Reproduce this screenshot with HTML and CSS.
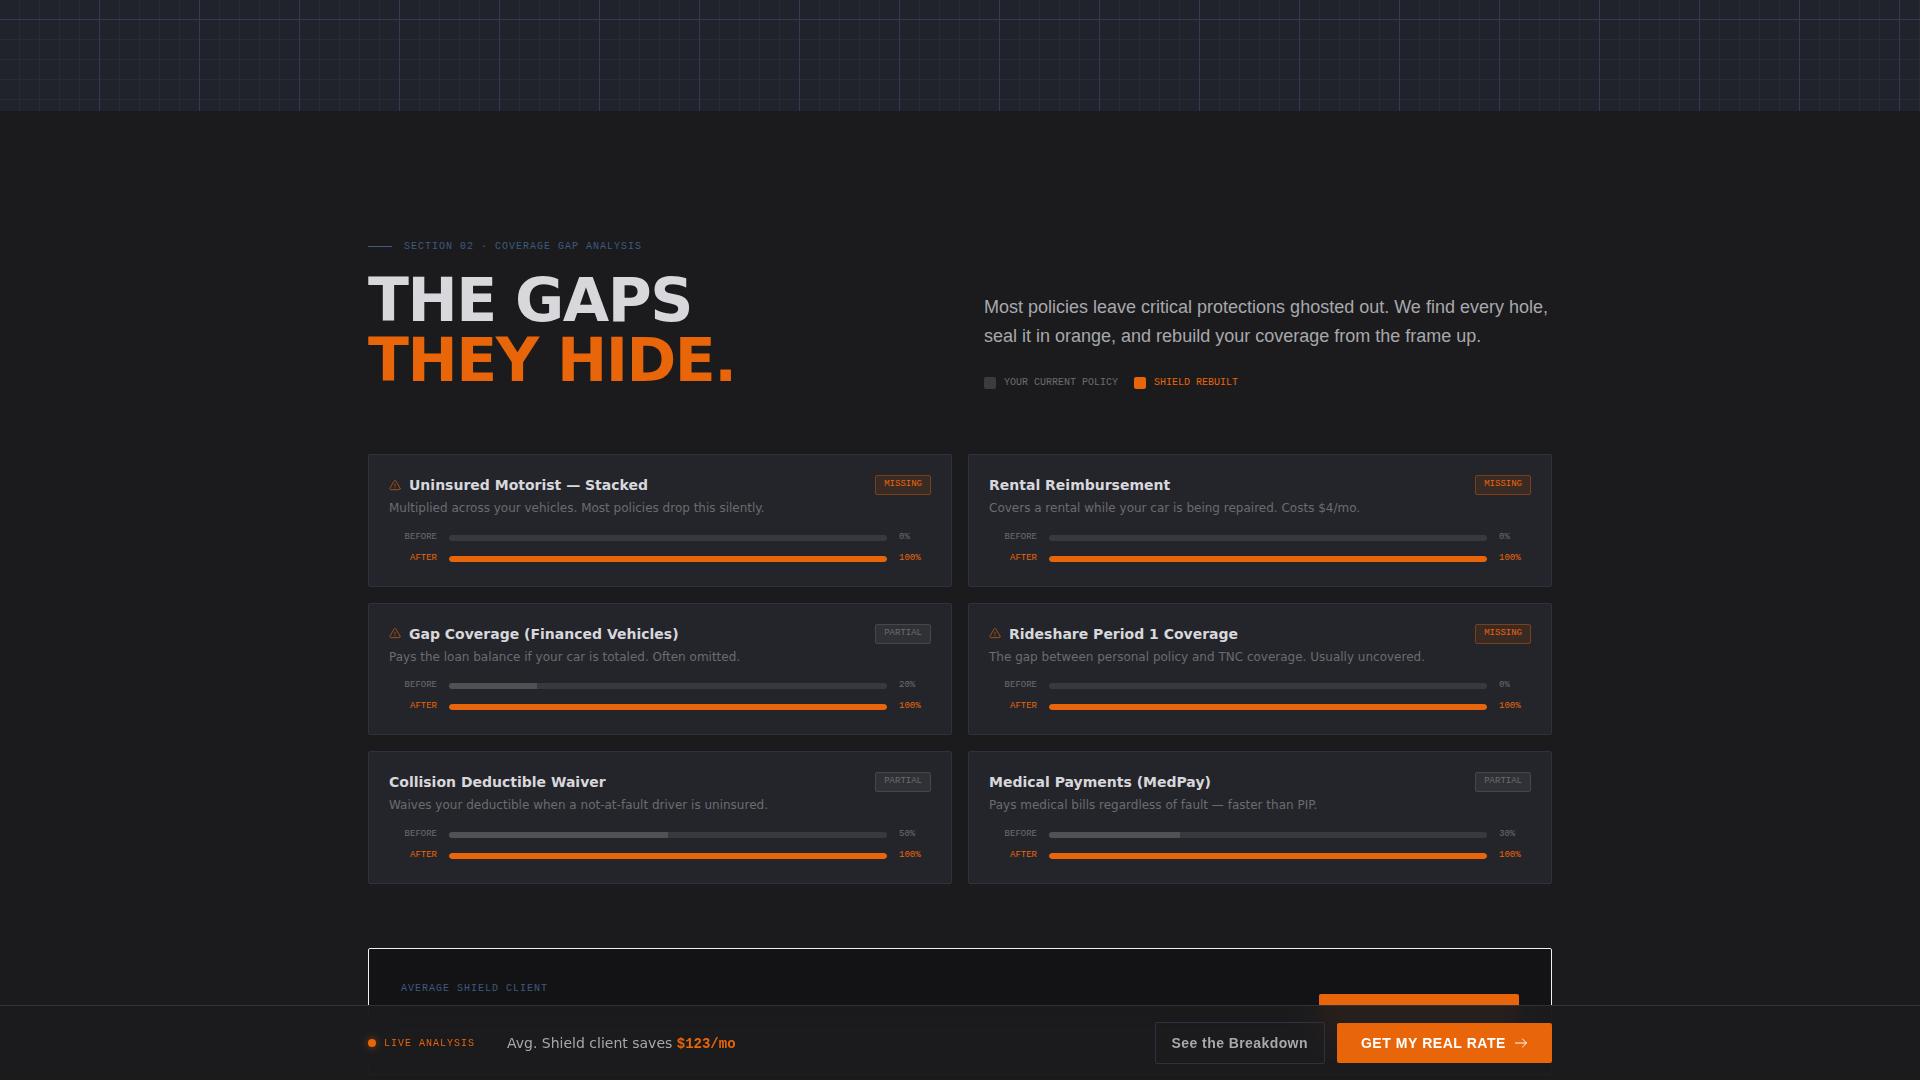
FILE: index.html
```html
<!DOCTYPE html>
<html lang="en">
<head>
<meta charset="utf-8">
<meta name="viewport" content="width=device-width, initial-scale=1">
<title>Shield – Coverage Gap Analysis</title>
<link rel="stylesheet" href="styles.css">
</head>
<body>
<svg class="sprite" aria-hidden="true">
  <symbol id="warning" viewBox="0 16 256 256"><path d="M235.07 189.09 147.61 37.22a22.75 22.75 0 0 0-39.22 0L20.93 189.09a21.53 21.53 0 0 0 0 21.72A22.35 22.35 0 0 0 40.55 222h174.9a22.35 22.35 0 0 0 19.6-11.19 21.53 21.53 0 0 0 .02-21.72ZM128 104v40" fill="none" stroke="currentColor" stroke-width="18" stroke-linecap="round" stroke-linejoin="round"/><circle cx="128" cy="180" r="12" fill="currentColor"/></symbol>
  <symbol id="arrow" viewBox="0 0 14 14"><path d="M1.5 7h11M8.5 3l4 4-4 4" fill="none" stroke="currentColor" stroke-width="1" stroke-linecap="round" stroke-linejoin="round"/></symbol>
</svg>
<div class="blueprint"></div>
<main class="section">
  <header class="intro">
    <div>
      <p class="eyebrow mono">SECTION 02 · COVERAGE GAP ANALYSIS</p>
      <h2 class="title">THE GAPS<br><span class="accent">THEY HIDE.</span></h2>
    </div>
    <div class="summary">
      <p class="lead">Most policies leave critical protections ghosted out. We find every hole, seal it in orange, and rebuild your coverage from the frame up.</p>
      <ul class="legend mono">
        <li><i class="swatch"></i><span>YOUR CURRENT POLICY</span></li>
        <li class="accent"><i class="swatch swatch-after"></i><span>SHIELD REBUILT</span></li>
      </ul>
    </div>
  </header>

  <div class="cards">
    <article class="card">
      <div class="card-head"><h3><svg class="warn"><use href="#warning"/></svg>Uninsured Motorist — Stacked</h3><span class="badge missing mono">MISSING</span></div>
      <p class="desc">Multiplied across your vehicles. Most policies drop this silently.</p>
      <div class="bars mono">
        <div class="bar"><span class="label">BEFORE</span><div class="track"></div><span class="value">0%</span></div>
        <div class="bar after"><span class="label">AFTER</span><div class="track"><div class="fill" style="width:100%"></div></div><span class="value">100%</span></div>
      </div>
    </article>
    <article class="card">
      <div class="card-head"><h3>Rental Reimbursement</h3><span class="badge missing mono">MISSING</span></div>
      <p class="desc">Covers a rental while your car is being repaired. Costs $4/mo.</p>
      <div class="bars mono">
        <div class="bar"><span class="label">BEFORE</span><div class="track"></div><span class="value">0%</span></div>
        <div class="bar after"><span class="label">AFTER</span><div class="track"><div class="fill" style="width:100%"></div></div><span class="value">100%</span></div>
      </div>
    </article>
    <article class="card">
      <div class="card-head"><h3><svg class="warn"><use href="#warning"/></svg>Gap Coverage (Financed Vehicles)</h3><span class="badge mono">PARTIAL</span></div>
      <p class="desc">Pays the loan balance if your car is totaled. Often omitted.</p>
      <div class="bars mono">
        <div class="bar"><span class="label">BEFORE</span><div class="track"><div class="fill" style="width:20%"></div></div><span class="value">20%</span></div>
        <div class="bar after"><span class="label">AFTER</span><div class="track"><div class="fill" style="width:100%"></div></div><span class="value">100%</span></div>
      </div>
    </article>
    <article class="card">
      <div class="card-head"><h3><svg class="warn"><use href="#warning"/></svg>Rideshare Period 1 Coverage</h3><span class="badge missing mono">MISSING</span></div>
      <p class="desc">The gap between personal policy and TNC coverage. Usually uncovered.</p>
      <div class="bars mono">
        <div class="bar"><span class="label">BEFORE</span><div class="track"></div><span class="value">0%</span></div>
        <div class="bar after"><span class="label">AFTER</span><div class="track"><div class="fill" style="width:100%"></div></div><span class="value">100%</span></div>
      </div>
    </article>
    <article class="card">
      <div class="card-head"><h3>Collision Deductible Waiver</h3><span class="badge mono">PARTIAL</span></div>
      <p class="desc">Waives your deductible when a not-at-fault driver is uninsured.</p>
      <div class="bars mono">
        <div class="bar"><span class="label">BEFORE</span><div class="track"><div class="fill" style="width:50%"></div></div><span class="value">50%</span></div>
        <div class="bar after"><span class="label">AFTER</span><div class="track"><div class="fill" style="width:100%"></div></div><span class="value">100%</span></div>
      </div>
    </article>
    <article class="card">
      <div class="card-head"><h3>Medical Payments (MedPay)</h3><span class="badge mono">PARTIAL</span></div>
      <p class="desc">Pays medical bills regardless of fault — faster than PIP.</p>
      <div class="bars mono">
        <div class="bar"><span class="label">BEFORE</span><div class="track"><div class="fill" style="width:30%"></div></div><span class="value">30%</span></div>
        <div class="bar after"><span class="label">AFTER</span><div class="track"><div class="fill" style="width:100%"></div></div><span class="value">100%</span></div>
      </div>
    </article>
  </div>

  <section class="result">
    <p class="result-label mono">AVERAGE SHIELD CLIENT</p>
    <button class="result-button" type="button" aria-label="Get my real rate"></button>
  </section>
</main>

<aside class="dock">
  <div class="dock-inner">
    <div class="status">
      <span class="live mono"><i class="dot"></i>LIVE ANALYSIS</span>
      <p class="saves">Avg. Shield client saves <strong class="accent mono">$123/mo</strong></p>
    </div>
    <div class="actions">
      <button class="btn ghost" type="button">See the Breakdown</button>
      <button class="btn primary" type="button">GET MY REAL RATE<svg class="arrow"><use href="#arrow"/></svg></button>
    </div>
  </div>
</aside>
</body>
</html>
```
FILE: styles.css
```css
:root {
  --bg: #1b1b1d;
  --orange: #e8650a;
  --blue: #3d5a80;
  --edge: #2d3140;
  --sans: "Liberation Sans", Arial, sans-serif;
  --display: "DejaVu Sans", sans-serif;
}
* { box-sizing: border-box; margin: 0; padding: 0; }
body { background: var(--bg); color: #d8d8dc; font-family: var(--display); line-height: 1.5; }
.sprite { display: none; }
.mono { font-family: "Liberation Mono", "Courier New", monospace; }
.accent { color: var(--orange); }

.blueprint {
  height: 111px;
  background-color: #20232b;
  background-image:
    linear-gradient(to right, transparent 99px, #313c52 99px),
    linear-gradient(to bottom, transparent 99px, #313c52 99px),
    linear-gradient(to right, transparent 19px, #262b34 19px),
    linear-gradient(to bottom, transparent 19px, #262b34 19px);
  background-size: 100px 100px, 100px 100px, 20px 20px, 20px 20px;
  background-position: 0 0, 0 20px, 0 0, 0 0;
}

.section { max-width: 1280px; margin: 0 auto; padding: 128px 48px; }
.intro { display: grid; grid-template-columns: 1fr 1fr; gap: 48px; align-items: end; margin-bottom: 64px; }
.eyebrow { display: flex; align-items: center; gap: 12px; margin-bottom: 16px; font-size: 10px; letter-spacing: 1px; line-height: 15px; color: var(--blue); }
.eyebrow::before { content: ""; width: 24px; height: 1px; background: var(--blue); }
.title { font-size: 60px; line-height: 60px; font-weight: 700; letter-spacing: -0.025em; }
.lead { font-family: var(--sans); font-size: 18px; line-height: 29px; color: #a8a8ac; margin-bottom: 24px; }
.legend { display: flex; gap: 16px; list-style: none; font-size: 10px; line-height: 15px; color: #6b6b70; }
.legend li { display: flex; align-items: center; gap: 8px; }
.legend .accent { color: var(--orange); }
.swatch { width: 12px; height: 12px; border-radius: 2px; background: #3c3c40; }
.swatch-after { background: var(--orange); }

.cards { display: grid; grid-template-columns: 1fr 1fr; gap: 16px; }
.card { padding: 20px; background: #24252b; border: 1px solid var(--edge); border-radius: 2px; }
.card-head { display: flex; justify-content: space-between; align-items: flex-start; height: 21px; }
h3 { display: flex; align-items: center; gap: 8px; font-size: 14px; line-height: 21px; font-weight: 700; }
.warn { width: 12px; height: 12px; color: #b8590f; }
.badge { padding: 0 8px 2px; font-size: 9px; line-height: 16px; border: 1px solid #46464b; border-radius: 2px; background: #303136; color: #6b6b70; }
.missing { border-color: #7a4019; background: #3a2a24; color: var(--orange); }
.desc { margin-top: 3px; font-size: 12px; line-height: 1.625; color: #6b6b70; }
.bars { display: grid; gap: 7px; margin-top: 12px; font-size: 9px; color: #6b6b70; }
.bar { display: flex; align-items: center; gap: 12px; }
.label { width: 48px; text-align: right; }
.value { width: 32px; }
.label, .value { padding-bottom: 2px; line-height: 12px; }
.after { color: var(--orange); }
.track { flex: 1; height: 6px; border-radius: 3px; overflow: hidden; background: #38393e; }
.fill { height: 100%; background: #505055; }
.after .fill { background: var(--orange); border-radius: 3px; }

.result { display: flex; justify-content: space-between; align-items: flex-start; margin-top: 64px; padding: 32px; border: 1px solid #f0f0f2; border-radius: 2px; background: #131315; }
.result-label { font-size: 10px; line-height: 15px; letter-spacing: 1px; color: var(--blue); }
.result-button { width: 200px; height: 48px; margin-top: 13px; border: 0; border-radius: 2px; background: var(--orange); }

.dock { position: fixed; left: 0; right: 0; bottom: 0; background: rgba(27, 27, 29, .95); border-top: 1px solid var(--edge); backdrop-filter: blur(12px); }
.dock-inner { display: flex; justify-content: space-between; align-items: center; max-width: 1280px; margin: 0 auto; padding: 16px 48px; }
.status { display: flex; align-items: center; gap: 32px; }
.live { display: flex; align-items: center; gap: 8px; font-size: 10px; letter-spacing: 1px; color: var(--orange); }
.dot { width: 8px; height: 8px; border-radius: 50%; background: var(--orange); box-shadow: 0 0 8px rgba(232, 101, 10, .6); }
.saves { font-size: 14px; line-height: 22px; color: #a8a8ac; }
.actions { display: flex; align-items: center; gap: 12px; }
.btn { display: flex; align-items: center; font: 700 14px/20px var(--sans); border-radius: 2px; }
.ghost { padding: 10px 16px; border: 1px solid var(--edge); background: transparent; color: #a8a8ac; letter-spacing: 0.03em; }
.primary { gap: 8px; padding: 10px 24px; border: 0; background: var(--orange); color: #fff; letter-spacing: 0.04em; }
.arrow { width: 14px; height: 14px; }
```
